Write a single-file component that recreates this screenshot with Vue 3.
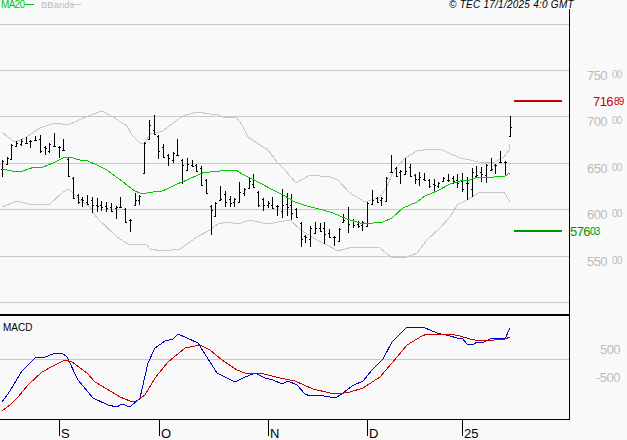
<script setup>
import { computed } from 'vue'

const gridY = [24, 70, 116, 163, 209, 256, 302, 359]
const ticks = [
  { x: 59, label: 'S' },
  { x: 159, label: 'O' },
  { x: 268, label: 'N' },
  { x: 367, label: 'D' },
  { x: 462, label: '25' }
]
const priceLabels = [
  { y: 80, big: '750' },
  { y: 126, big: '700' },
  { y: 173, big: '650' },
  { y: 219, big: '600' },
  { y: 266, big: '550' }
]

// high / low of each session, read left to right
const ranges = [
  [160, 177], [157, 165], [144, 160], [141, 147], [139, 146], [137, 144], [140, 148], [136, 141], [135, 153], [146, 155],
  [143, 153], [133, 147], [146, 158], [139, 151], [158, 177], [177, 199], [194, 204], [197, 207], [195, 205], [197, 213],
  [198, 212], [201, 211], [202, 212], [203, 212], [206, 219], [197, 208], [208, 223], [219, 232], [193, 206], [195, 205],
  [142, 174], [120, 140], [115, 135], [135, 159], [144, 158], [154, 166], [152, 163], [139, 156], [159, 184], [158, 171],
  [160, 167], [164, 172], [166, 186], [179, 194], [205, 235], [202, 217], [186, 201], [191, 207], [196, 207], [198, 207],
  [182, 203], [188, 196], [178, 189], [174, 188], [191, 207], [198, 211], [201, 208], [197, 209], [205, 216], [189, 218],
  [193, 216], [194, 220], [208, 218], [222, 247], [235, 243], [226, 247], [222, 234], [223, 232], [222, 244], [229, 238],
  [236, 246], [228, 242], [214, 223], [207, 233], [219, 228], [221, 228], [221, 231], [202, 227], [190, 205], [197, 203],
  [197, 206], [177, 202], [155, 173], [167, 177], [170, 184], [158, 175], [164, 177], [174, 184], [172, 186], [173, 181],
  [179, 188], [179, 193], [182, 188], [177, 182], [174, 182], [176, 184], [174, 188], [173, 192], [177, 200], [168, 197],
  [166, 177], [167, 182], [164, 183], [158, 171], [164, 174], [151, 163], [161, 176], [116, 137]
]

const clamp = (v, lo, hi) => Math.min(hi, Math.max(lo, v))
const mid = (r) => Math.round((r[0] + r[1]) / 2)

const bars = computed(() => ranges.map((r, i) => {
  const prev = ranges[i - 1] || r
  const next = ranges[i + 1] || r
  return {
    x: Math.floor(2.3 + i * 4.745),
    top: r[0],
    h: r[1] - r[0],
    open: clamp(mid(prev), r[0] + 1, r[1] - 1),
    close: clamp(mid(next), r[0] + 1, r[1] - 1)
  }
}))

const ma20 = '2,169 12,171 23,171 28,169 35,167 43,167 53,163 63,158 69,157 80,160 88,161 97,165 107,170 112,174 122,181 128,186 135,191 140,193 147,193 153,192 162,191 167,189 177,184 187,180 200,174 205,172 210,172 220,171 227,170 236,170 242,174 250,178 260,183 273,190 283,195 295,202 307,206 323,210 333,213 347,219 360,223 373,223 383,222 392,218 403,208 417,202 425,196 437,191 450,184 460,181 470,180 477,177 494,177 505,176 510,173'
const bbUpper = '2,132 8,137 15,142 25,138 40,128 55,123 68,125 88,116 102,111 113,117 127,126 132,135 140,143 145,143 150,134 163,131 173,123 183,116 197,112 210,114 217,114 223,117 237,118 242,125 248,137 260,145 268,150 277,162 285,170 296,183 310,175 330,177 338,180 350,193 365,202 380,197 387,187 393,172 405,158 417,151 430,149 440,149 447,152 460,158 484,163 495,162 504,157 509,150 510,144'
const bbLower = '2,207 17,201 33,205 50,204 63,192 69,189 80,200 90,207 97,218 117,237 128,244 146,244 150,249 163,251 180,249 197,237 210,230 218,224 227,222 238,224 250,220 267,224 290,220 300,229 313,238 325,244 338,251 352,247 380,248 392,258 407,257 417,253 427,240 440,228 450,217 457,205 467,200 480,192 504,192 510,202'
const macdBlue = '2,402 8,394 22,371 35,358 45,357 53,354 62,353 67,357 78,380 93,398 108,405 117,407 122,404 130,407 140,398 148,363 155,348 165,341 173,339 178,334 187,338 198,343 210,362 217,373 227,378 235,382 243,378 255,373 265,378 273,380 282,384 288,381 297,385 305,394 310,396 318,395 330,397 337,397 343,393 352,386 363,381 372,370 383,359 392,342 407,327 417,327 425,328 437,333 450,336 457,338 462,338 467,344 474,344 477,342 484,342 490,339 500,338 505,339 510,328'
const macdRed = '2,411 10,405 18,397 28,385 42,372 53,366 65,360 72,362 87,373 95,382 107,389 120,397 130,401 137,401 145,395 155,378 168,362 185,348 200,345 210,350 222,360 237,370 245,373 260,373 280,378 295,381 313,389 330,393 338,394 350,392 363,388 380,377 392,363 407,345 417,339 422,336 427,334 450,334 460,336 470,339 480,341 494,340 505,339 510,337'
</script>

<template>
  <div class="chart-page">
    <svg class="chart" width="627" height="440" viewBox="0 0 627 440" xmlns="http://www.w3.org/2000/svg">
      <!-- GRID -->
      <g class="crisp">
        <line v-for="y in gridY" :key="y" class="grid" x1="0" x2="569" :y1="y + 0.5" :y2="y + 0.5" />
      </g>

      <!-- LEGEND -->
      <text class="legend legend-ma" x="1" y="8">MA20</text>
      <rect class="fill-ma" x="25" y="4" width="9" height="1" />
      <text class="legend legend-bb" x="41" y="8">BBands</text>
      <rect class="fill-bb" x="72" y="4" width="9" height="1" />
      <text class="stamp" x="449" y="8">© TEC 17/1/2025 4:0 GMT</text>

      <!-- PRICE PANEL -->
      <g class="crisp">
        <polyline class="line bb" :points="bbUpper" />
        <polyline class="line bb" :points="bbLower" />
      </g>
      <g class="crisp">
        <g v-for="(b, i) in bars" :key="i">
          <rect class="bar" :x="b.x" :y="b.top" width="1" :height="b.h" />
          <rect class="bar" :x="b.x - 1" :y="b.open" width="1" height="1" />
          <rect class="bar" :x="b.x + 1" :y="b.close" width="1" height="1" />
        </g>
        <polyline class="line ma" :points="ma20" />
      </g>

      <!-- TARGET LEVELS -->
      <rect class="level-red" x="514" y="100" width="48" height="2" />
      <rect class="level-green" x="514" y="230" width="48" height="2" />
      <text class="val red" x="593" y="106">716</text>
      <text class="val-small red" x="614" y="105">89</text>
      <text class="val green" x="570" y="236">576</text>
      <text class="val-small green" x="590" y="235">03</text>

      <g v-for="p in priceLabels" :key="p.y">
        <text class="val gray" x="587" :y="p.y">{{ p.big }}</text>
        <text class="val-small gray" x="612" :y="p.y - 2">00</text>
      </g>

      <!-- MACD PANEL -->
      <text class="legend macd-label" x="3" y="331">MACD</text>
      <g class="crisp">
        <polyline class="line blue" :points="macdBlue" />
        <polyline class="line red-line" :points="macdRed" />
      </g>
      <text class="val gray" x="600" y="354">500</text>
      <text class="val gray" x="596" y="382">-500</text>

      <!-- FRAME AND AXIS -->
      <g class="crisp">
        <rect class="bar" x="0" y="314" width="570" height="2" />
        <rect class="bar" x="569" y="9" width="1" height="411" />
        <rect class="bar" x="0" y="419" width="570" height="1" />
        <rect v-for="t in ticks" :key="t.x" class="bar" :x="t.x" y="419" width="1" height="17" />
      </g>
      <text v-for="t in ticks" :key="t.label" class="month" :x="t.x + 2" y="438">{{ t.label }}</text>
    </svg>
  </div>
</template>

<style scoped>
.chart-page {
  display: flex;
  width: 627px;
  height: 440px;
  overflow: hidden;
  background: #f9f9f9;
}
.chart { display: block; font-family: "Liberation Sans", Arial, sans-serif; }
.crisp { shape-rendering: crispEdges; }

.grid { stroke: #c8c8c8; stroke-width: 1; }
.line { fill: none; stroke-width: 1; }
.bb { stroke: #c8c8c8; }
.ma { stroke: #00c800; }
.blue { stroke: #0000c8; }
.red-line { stroke: #c80000; }
.bar { fill: #000; }

.fill-ma { fill: #00c800; }
.fill-bb { fill: #c8c8c8; }
.level-red { fill: #c80000; }
.level-green { fill: #009600; }

.legend { font-size: 10px; }
.legend-ma { fill: #00c800; letter-spacing: -0.7px; }
.legend-bb { fill: #bcbcbc; font-size: 9.5px; }
.macd-label { fill: #000; }
.stamp { font-size: 10px; font-style: italic; fill: #000; letter-spacing: 0.25px; }
.month { font-size: 13px; fill: #000; }

.val { font-size: 13px; letter-spacing: -0.55px; }
.val-small { font-size: 10px; letter-spacing: -0.8px; }
.red { fill: #c80000; }
.green { fill: #009600; }
.gray { fill: #bcbcbc; }
</style>
